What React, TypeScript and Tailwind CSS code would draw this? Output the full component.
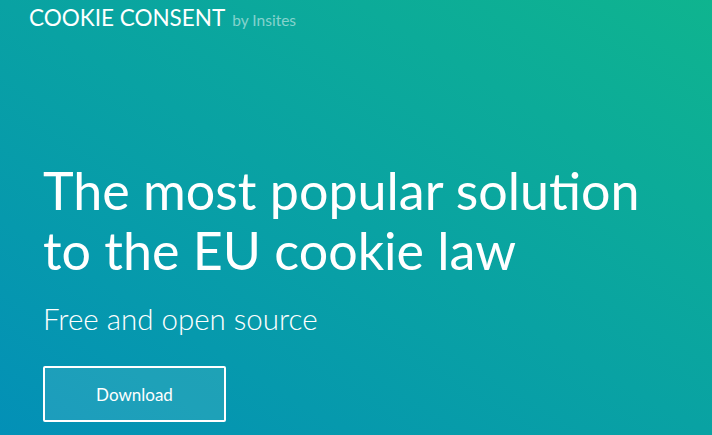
import React from 'react';

const App: React.FC = () => {
  return (
    <div
      className="w-[712px] h-[435px] overflow-hidden bg-[linear-gradient(to_top_right,#0390b7,#0fb48f)] text-white"
      style={{ fontFamily: 'Lato, "Open Sans", sans-serif' }}
    >
      {/* Header */}
      <div className="flex items-baseline gap-[7px] pl-[29px] pt-[4px]">
        <span className="text-[22.5px] leading-[28px]">COOKIE CONSENT</span>
        <span className="text-[15.5px] text-white/50">by Insites</span>
      </div>

      {/* Hero */}
      <div className="pl-[43px] pt-[128px]">
        <h1 className="text-[52px] leading-[60px] font-normal">
          The most popular solution
          <br />
          to the EU cookie law
        </h1>
        <p className="mt-[21px] text-[29.5px] leading-[36px] font-light">Free and open source</p>
        <button className="mt-[29px] w-[183px] h-[56px] border-2 border-white rounded-[2px] bg-white/10 text-[17px] font-normal">
          Download
        </button>
      </div>
    </div>
  );
};

export default App;
